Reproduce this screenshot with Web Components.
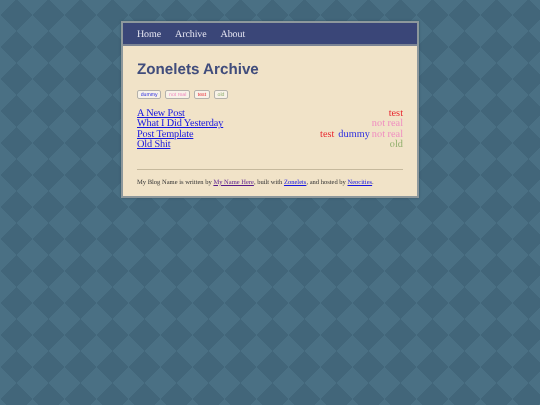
<!DOCTYPE html>
<html lang="en">
<head>
<meta charset="utf-8">
<title>Zonelets Archive</title>
<style>
    html, body {
        margin: 0;
        height: 100%;
    }

    body {
        overflow: hidden;
        background-color: #42667a;
        background-image:
            linear-gradient(135deg, #4a7084 25%, transparent 25%),
            linear-gradient(225deg, #4a7084 25%, transparent 25%),
            linear-gradient(45deg, #4a7084 25%, transparent 25%),
            linear-gradient(315deg, #4a7084 25%, transparent 25%);
        background-size: 32px 32px;
        background-position: 0 -1px;
        font-family: "Liberation Serif", serif;
        text-rendering: geometricPrecision;
    }
</style>
</head>
<body>

<template id="zl-page-template">
    <style>
        :host {
            display: block;
            box-sizing: border-box;
            width: 298px;
            margin: 21px 0 0 121px;
            border: solid 2px #8d989c;
            box-shadow: 0 0 2px #33505f;
            background-color: #f1e3c8;
            filter: blur(0.3px);
        }

        main {
            padding: 15px 14px 9px 14px;
        }

        footer {
            margin-top: 18px;
            padding-top: 8px;
            border-top: solid 1px #c6b99d;
            font-size: 6.53px;
            line-height: 9px;
            color: #333;
        }
    </style>
    <slot name="nav"></slot>
    <main>
        <slot></slot>
        <footer><slot name="footer"></slot></footer>
    </main>
</template>

<template id="zl-nav-template">
    <style>
        :host {
            display: flex;
            gap: 14px;
            height: 20px;
            padding: 1px 14px 0 14px;
            align-items: center;
            background-color: #3a4678;
            border-bottom: solid 2px #7b8494;
        }

        ::slotted(a) {
            color: #e6e6f2;
            text-decoration: none;
            font-size: 10px;
            letter-spacing: -0.1px;
        }
    </style>
    <slot></slot>
</template>

<template id="zl-title-template">
    <style>
        :host {
            display: block;
            margin: 0 0 12px 0;
            color: #414d7c;
            font-family: "Liberation Sans", sans-serif;
            font-size: 15.2px;
            font-weight: 700;
            line-height: 17px;
        }
    </style>
    <slot></slot>
</template>

<template id="zl-tag-bar-template">
    <style>
        :host {
            display: flex;
            gap: 4px;
            margin-bottom: 10px;
        }
    </style>
    <slot></slot>
</template>

<template id="zl-chip-template">
    <style>
        :host {
            display: block;
            box-sizing: border-box;
            height: 9px;
            padding: 0 2.7px;
            border: solid 1px #b4b1ab;
            border-radius: 2px;
            background-color: #f8f2e8;
            font-family: "Liberation Sans", sans-serif;
            font-size: 5.2px;
            line-height: 8px;
        }
    </style>
    <slot></slot>
</template>

<template id="zl-post-row-template">
    <style>
        :host {
            display: flex;
            justify-content: space-between;
            font-size: 10.3px;
            line-height: 10.4px;
        }

        .tags {
            display: flex;
            gap: 2px;
        }

        a {
            color: #1414e0;
            letter-spacing: -0.15px;
        }
    </style>
    <a href="#"><slot></slot></a>
    <div class="tags"><slot name="tags"></slot></div>
</template>

<script type="module">
    const define_simple = (name, template_id) => {
        customElements.define(
            name,
            class extends HTMLElement {
                constructor() {
                    super();
                    const template_clone = document.getElementById(template_id).content.cloneNode(true);
                    this.attachShadow({ mode: "open" }).append(template_clone);
                }
            },
        );
    };

    define_simple("zl-page", "zl-page-template");
    define_simple("zl-nav", "zl-nav-template");
    define_simple("zl-title", "zl-title-template");
    define_simple("zl-tag-bar", "zl-tag-bar-template");
    define_simple("zl-chip", "zl-chip-template");
    define_simple("zl-post-row", "zl-post-row-template");
</script>

<zl-page>
    <zl-nav slot="nav">
        <a href="#">Home</a>
        <a href="#">Archive</a>
        <a href="#">About</a>
    </zl-nav>

    <zl-title>Zonelets Archive</zl-title>

    <zl-tag-bar>
        <zl-chip style="color: #2a2ae0">dummy</zl-chip>
        <zl-chip style="color: #f08cc0">not real</zl-chip>
        <zl-chip style="color: #e8262e">test</zl-chip>
        <zl-chip style="color: #8fae6a">old</zl-chip>
    </zl-tag-bar>

    <zl-post-row>A New Post<span slot="tags" style="color: #e8262e">test</span></zl-post-row>
    <zl-post-row>What I Did Yesterday<span slot="tags" style="color: #f08cc0">not real</span></zl-post-row>
    <zl-post-row>Post Template
        <span slot="tags" style="color: #e8262e; margin-right: 2px">test</span>
        <span slot="tags" style="color: #2a2ae0">dummy</span>
        <span slot="tags" style="color: #f08cc0">not real</span>
    </zl-post-row>
    <zl-post-row>Old Shit<span slot="tags" style="color: #8fae6a">old</span></zl-post-row>

    <span slot="footer">My Blog Name is written by <a href="#" style="color: #551a8b">My Name Here</a>, built with <a href="#" style="color: #1414e0">Zonelets</a>, and hosted by <a href="#" style="color: #1414e0">Neocities</a>.</span>
</zl-page>

</body>
</html>
